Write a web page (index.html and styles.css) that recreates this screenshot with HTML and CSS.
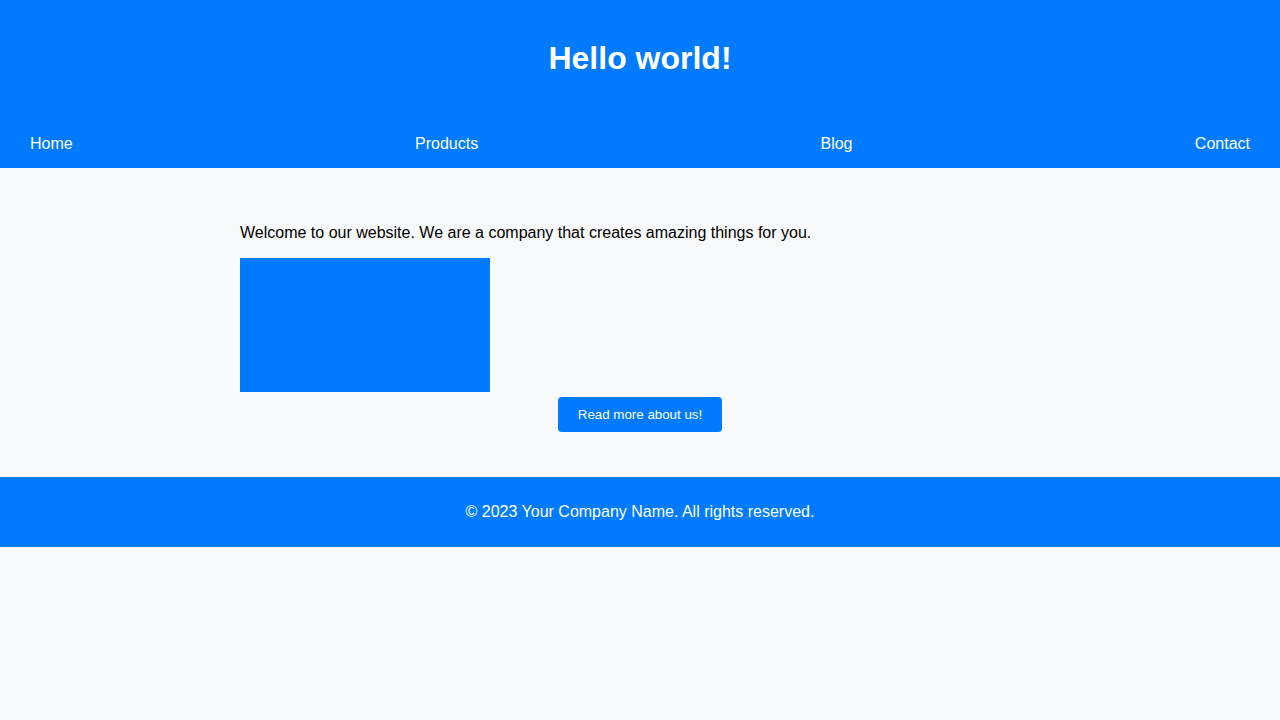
FILE: index.html
```html
<!DOCTYPE html>
<html lang="en">
<head>
<meta charset="utf-8">
<title>Hello world!</title>
<link rel="stylesheet" href="styles.css">
</head>
<body>
<header class="site-header">
  <h1 class="site-title">Hello world!</h1>
  <nav class="site-nav">
    <a href="#" class="nav-link">Home</a>
    <a href="#" class="nav-link">Products</a>
    <a href="#" class="nav-link">Blog</a>
    <a href="#" class="nav-link">Contact</a>
  </nav>
</header>
<main class="content">
  <p class="intro">Welcome to our website. We are a company that creates amazing things for you.</p>
  <div class="hero-box"></div>
  <button class="cta">Read more about us!</button>
</main>
<footer class="site-footer">
  <p class="copy">© 2023 Your Company Name. All rights reserved.</p>
</footer>
</body>
</html>
```
FILE: styles.css
```css
html, body {
  margin: 0;
  padding: 0;
  background: #f8f9fa;
  font-family: "Liberation Sans", Arial, sans-serif;
  color: #000;
}
.site-header {
  background: #007bff;
  color: #fff;
  padding-top: 19px;
}
.site-title {
  margin: 21px 0;
  font-size: 32px;
  line-height: 37px;
  text-align: center;
  font-weight: bold;
}
.site-nav {
  display: flex;
  justify-content: space-between;
  padding: 37px 30px 15px;
}
.nav-link {
  color: #fff;
  text-decoration: none;
  font-size: 16px;
  line-height: 18px;
}
.content {
  max-width: 800px;
  margin: 0 auto;
  padding: 40px 0;
}
.intro {
  margin: 16px 0;
  font-size: 16px;
  line-height: 18px;
}
.hero-box {
  width: 250px;
  height: 134px;
  background: #007bff;
}
.cta {
  display: block;
  margin: 5px auto;
  width: 164px;
  height: 35px;
  background: #007bff;
  color: #fff;
  border: none;
  border-radius: 4px;
  font-family: "Liberation Sans", Arial, sans-serif;
  font-size: 13.33px;
  padding: 0 0 1px;
}
.site-footer {
  background: #007bff;
  color: #fff;
  text-align: center;
  padding: 25px 0;
}
.copy {
  margin: 0;
  font-size: 16px;
  line-height: 20px;
}
```
